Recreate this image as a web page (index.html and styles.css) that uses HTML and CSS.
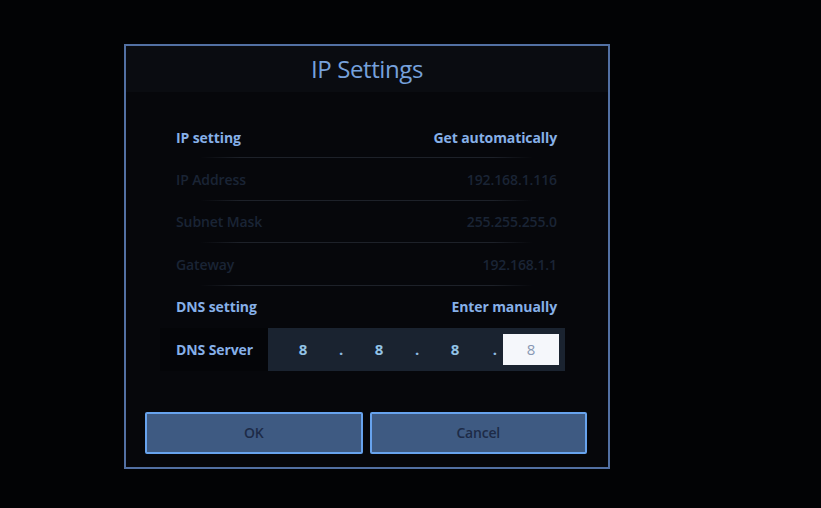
FILE: index.html
```html
<!DOCTYPE html>
<html lang="en">
<head>
<meta charset="utf-8">
<title>IP Settings</title>
<link rel="stylesheet" href="styles.css">
</head>
<body>
<div class="screen">
  <div class="dialog">
    <div class="header"><h1 class="title">IP Settings</h1></div>
    <div class="list">
      <div class="row sep"><span class="label">IP setting</span><span class="value">Get automatically</span></div>
      <div class="row sep disabled"><span class="label">IP Address</span><span class="value">192.168.1.116</span></div>
      <div class="row sep disabled"><span class="label">Subnet Mask</span><span class="value">255.255.255.0</span></div>
      <div class="row sep disabled"><span class="label">Gateway</span><span class="value">192.168.1.1</span></div>
      <div class="row"><span class="label">DNS setting</span><span class="value">Enter manually</span></div>
      <div class="dns-row">
        <span class="dns-label">DNS Server</span>
        <div class="dns-fields">
          <span class="octet">8</span><span class="dot">.</span>
          <span class="octet">8</span><span class="dot">.</span>
          <span class="octet">8</span><span class="dot last">.</span>
          <span class="octet-edit">8</span>
        </div>
      </div>
    </div>
    <div class="buttons">
      <div class="btn">OK</div>
      <div class="btn">Cancel</div>
    </div>
  </div>
</div>
</body>
</html>
```
FILE: styles.css
```css
html, body {
  margin: 0;
  padding: 0;
  background: #020305;
}
body {
  width: 821px;
  height: 508px;
  overflow: hidden;
  font-family: "Open Sans", "DejaVu Sans", sans-serif;
}
.screen {
  padding: 44px 0 0 124px;
}
.dialog {
  box-sizing: border-box;
  width: 486px;
  height: 425px;
  border: 2px solid #5270a3;
  background: #06070b;
  display: flex;
  flex-direction: column;
}
.header {
  height: 46px;
  background: #0a0c11;
  display: flex;
  align-items: center;
  justify-content: center;
}
.title {
  margin: 0;
  font-size: 24px;
  font-weight: 400;
  letter-spacing: -0.4px;
  color: #76a1dc;
  line-height: 1;
  padding-bottom: 1px;
}
.list {
  margin-top: 24px;
  padding: 0 51px 0 50px;
  display: flex;
  flex-direction: column;
}
.row {
  height: 42.4px;
  display: flex;
  align-items: center;
  justify-content: space-between;
  font-size: 14px;
  font-weight: 700;
  letter-spacing: -0.1px;
  color: #86b0e8;
}
.row.sep {
  background: linear-gradient(to right, rgba(32,36,46,0), #1d2129 12%, #1d2129 88%, rgba(32,36,46,0)) no-repeat center bottom / calc(100% - 48px) 1px;
}
.row.disabled {
  font-weight: 600;
  color: #1a2435;
}
.dns-row {
  height: 43px;
  margin: 0 -8px 0 -16px;
  display: flex;
  font-size: 14px;
  font-weight: 700;
  letter-spacing: -0.1px;
}
.dns-label {
  width: 92px;
  padding-left: 16px;
  background: #040508;
  color: #86b0e8;
  display: flex;
  align-items: center;
}
.dns-fields {
  flex: 1;
  background: #1a2330;
  display: flex;
  align-items: center;
  padding-left: 16px;
}
.octet {
  width: 38px;
  text-align: center;
  color: #92c3e6;
  font-size: 15px;
}
.dot {
  width: 38px;
  text-align: center;
  color: #8fbbe0;
  font-size: 15px;
}
.dot.last {
  width: 29px;
  text-align: right;
  padding-right: 6px;
  box-sizing: border-box;
}
.octet-edit {
  width: 56px;
  height: 31px;
  background: #f5f7fb;
  color: #8897b3;
  font-size: 15px;
  font-weight: 400;
  display: flex;
  align-items: center;
  justify-content: center;
}
.buttons {
  margin-top: 41px;
  padding: 0 21px 0 19px;
  display: flex;
  gap: 7px;
}
.btn {
  flex: 1;
  box-sizing: border-box;
  height: 42px;
  background: #3e5a82;
  border: 2px solid #67a3ee;
  border-radius: 2px;
  display: flex;
  align-items: center;
  justify-content: center;
  color: #1d2b47;
  font-size: 14px;
  font-weight: 600;
  letter-spacing: -0.2px;
}
```
